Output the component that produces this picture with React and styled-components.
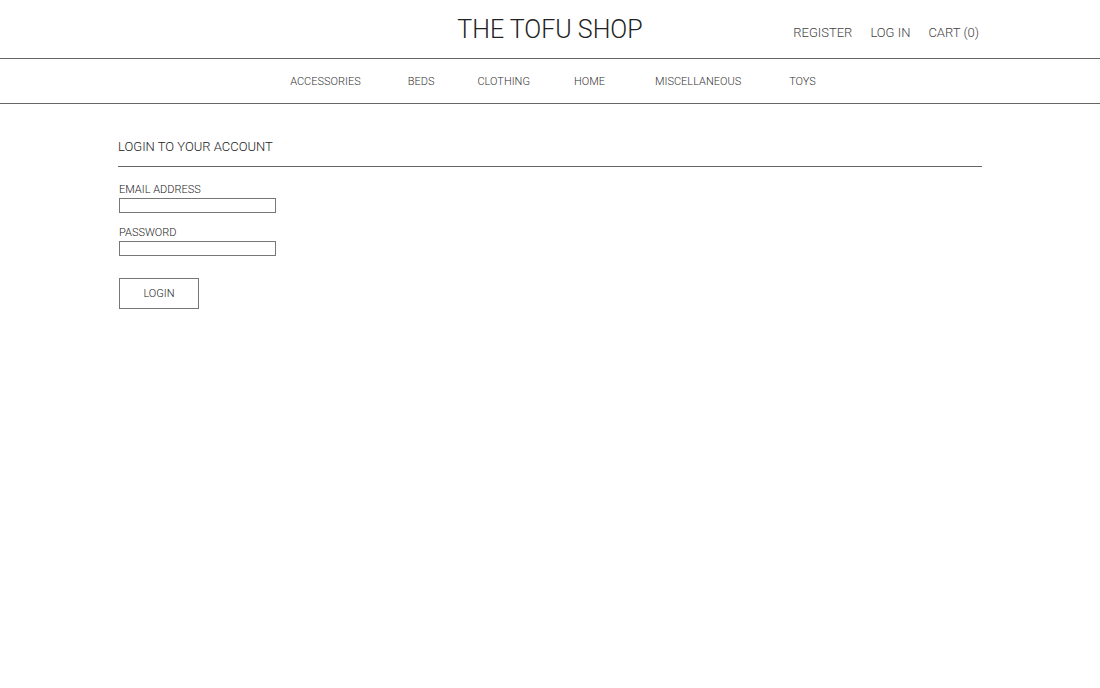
import React from 'react';
import styled, { createGlobalStyle } from 'styled-components';

const GlobalStyle = createGlobalStyle`
  body {
    margin: 0;
    background: #ffffff;
    font-family: Roboto, "Liberation Sans", sans-serif;
    font-weight: 300;
    color: #222222;
  }
`;

const Header = styled.header`
  height: 58px;
  border-bottom: 1px solid #666666;
  display: grid;
  grid-template-columns: 1fr auto 1fr;
  align-items: center;
  padding: 0 121px;
`;

const Title = styled.h1`
  grid-column: 2;
  margin: 0;
  font-size: 25px;
  font-weight: 300;
  color: #222222;
  padding-top: 1px;
`;

const UserLinks = styled.div`
  justify-self: end;
  display: flex;
  gap: 18px;
  font-size: 13px;
  color: #444444;
  padding-top: 6px;
`;

const UserLink = styled.a`
  color: inherit;
  text-decoration: none;
`;

const Nav = styled.nav`
  height: 44px;
  border-bottom: 1px solid #666666;
  display: flex;
  justify-content: center;
  align-items: center;
  padding-left: 6px;
`;

const NavItem = styled.a`
  font-size: 11px;
  color: #333333;
  text-decoration: none;
  margin-left: ${({ $space }) => $space}px;
`;

const Main = styled.main`
  width: 864px;
  margin: 0 auto;
  padding-top: 35px;
`;

const Heading = styled.h2`
  margin: 0;
  font-size: 13px;
  font-weight: 300;
  color: #222222;
  padding-bottom: 12px;
  border-bottom: 1px solid #666666;
`;

const Form = styled.form`
  display: flex;
  flex-direction: column;
  align-items: flex-start;
  padding: 16px 1px 0;
`;

const Field = styled.label`
  display: flex;
  flex-direction: column;
  font-size: 11px;
  color: #222222;
  margin-bottom: ${({ $last }) => ($last ? '22px' : '13px')};
`;

const Input = styled.input`
  margin-top: 2px;
  width: 157px;
  height: 15px;
  box-sizing: border-box;
  border: 1px solid #777777;
  padding: 0 3px;
  font-family: inherit;
  font-size: 10px;
  outline: none;
`;

const Button = styled.button`
  width: 80px;
  height: 31px;
  background: #ffffff;
  border: 1px solid #777777;
  font-family: inherit;
  font-weight: 300;
  font-size: 11px;
  color: #222222;
  cursor: pointer;
`;

const navItems = [
  { label: 'ACCESSORIES', space: 0 },
  { label: 'BEDS', space: 47 },
  { label: 'CLOTHING', space: 43 },
  { label: 'HOME', space: 44 },
  { label: 'MISCELLANEOUS', space: 50 },
  { label: 'TOYS', space: 48 },
];

export default function App() {
  return (
    <>
      <GlobalStyle />
      <Header>
        <Title>THE TOFU SHOP</Title>
        <UserLinks>
          <UserLink href="#">REGISTER</UserLink>
          <UserLink href="#">LOG IN</UserLink>
          <UserLink href="#">CART (0)</UserLink>
        </UserLinks>
      </Header>
      <Nav>
        {navItems.map(item => (
          <NavItem href="#" key={item.label} $space={item.space}>{item.label}</NavItem>
        ))}
      </Nav>
      <Main>
        <Heading>LOGIN TO YOUR ACCOUNT</Heading>
        <Form onSubmit={e => e.preventDefault()}>
          <Field>
            EMAIL ADDRESS
            <Input type="email" />
          </Field>
          <Field $last>
            PASSWORD
            <Input type="password" />
          </Field>
          <Button type="submit">LOGIN</Button>
        </Form>
      </Main>
    </>
  );
}
